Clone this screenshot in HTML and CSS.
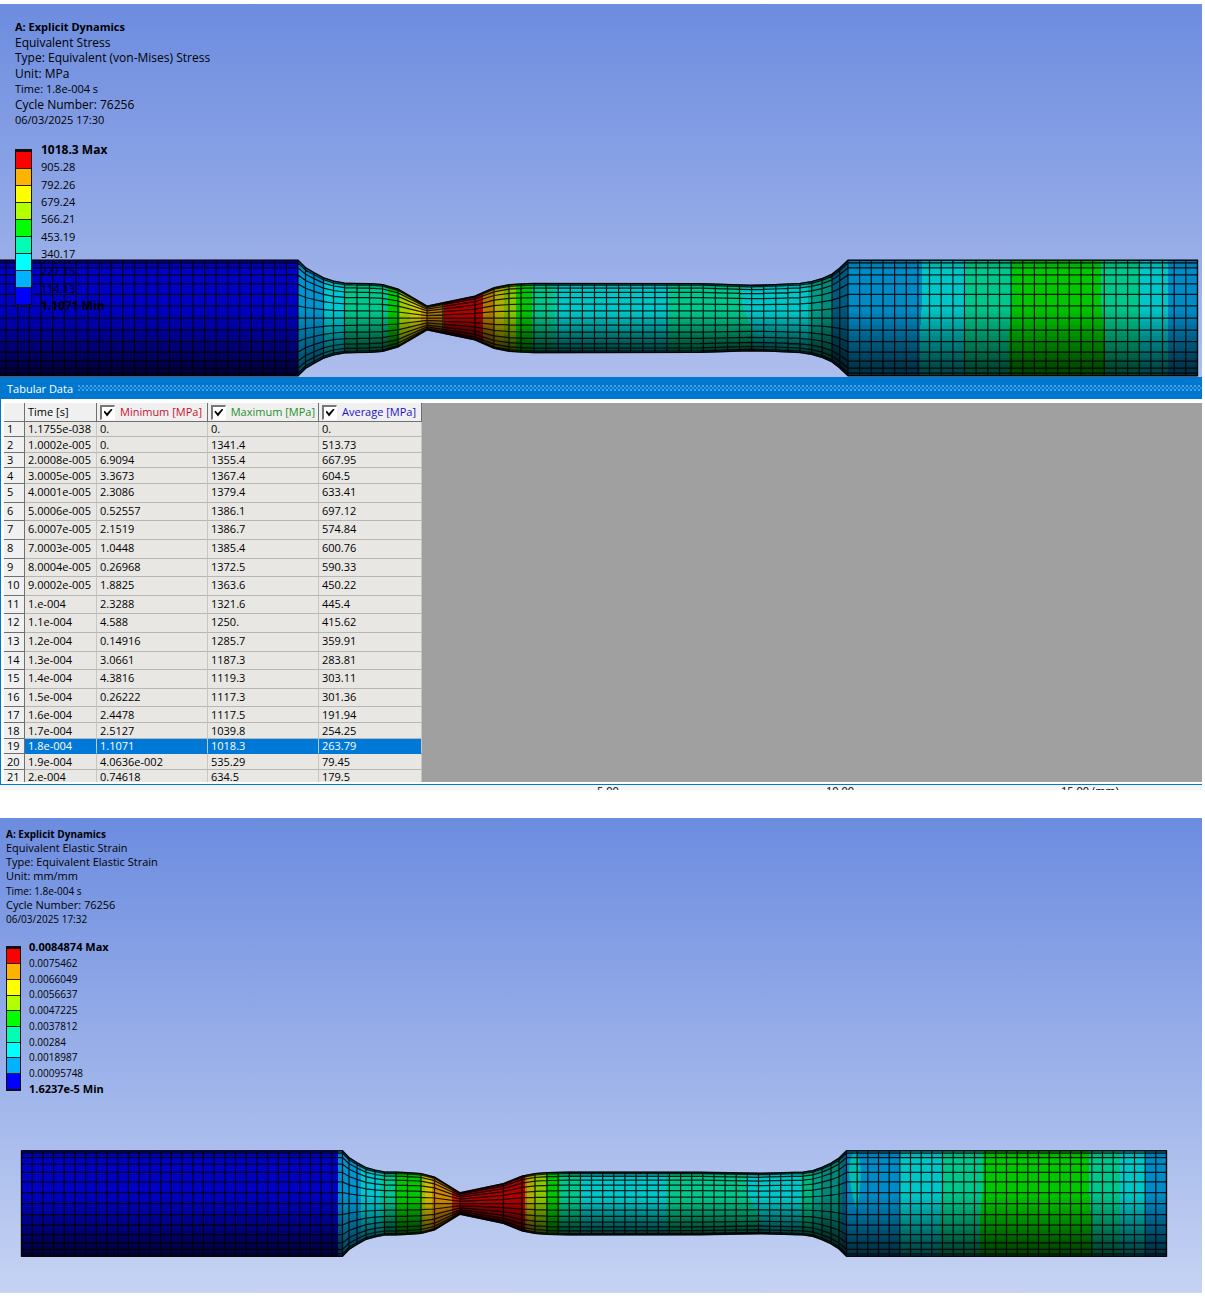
FILE: index.html
```html
<!DOCTYPE html>
<html lang="en">
<head>
<meta charset="utf-8">
<meta name="viewport" content="width=device-width, initial-scale=1">
<title>Explicit Dynamics results</title>
<link rel="stylesheet" href="styles.css">
</head>
<body>
<main class="page">
  <section class="viewer viewer-stress" aria-label="Equivalent Stress">
    <svg class="model" id="stress-model" viewBox="0 4 1202 373" role="img" aria-label="Specimen coloured by equivalent stress"></svg>
    <div class="overlay">
      <div class="info">
        <strong>A: Explicit Dynamics</strong>
        <span>Equivalent Stress</span>
        <span>Type: Equivalent (von-Mises) Stress</span>
        <span>Unit: MPa</span>
        <time>Time: 1.8e-004 s</time>
        <span>Cycle Number: 76256</span>
        <time>06/03/2025 17:30</time>
      </div>
      <div class="legend">
        <div class="scale"><i class="c9"></i><i class="c8"></i><i class="c7"></i><i class="c6"></i><i class="c5"></i><i class="c4"></i><i class="c3"></i><i class="c2"></i><i class="c1"></i></div>
        <div class="values">
          <strong>1018.3 Max</strong><span>905.28</span><span>792.26</span><span>679.24</span><span>566.21</span><span>453.19</span><span>340.17</span><span>227.15</span><span>114.13</span><strong>1.1071 Min</strong>
        </div>
      </div>
    </div>
  </section>

  <section class="panel">
    <header class="panel-title"><h2>Tabular Data</h2><span class="grip"></span></header>
    <div class="panel-body">
      <div class="sheet">
      <table class="data">
        <colgroup><col class="col-no"><col class="col-time"><col class="col-wide"><col class="col-wide"><col class="col-avg"></colgroup>
        <thead>
          <tr>
            <th></th>
            <th>Time [s]</th>
            <th><label class="min"><input type="checkbox" checked>Minimum [MPa]</label></th>
            <th><label class="max"><input type="checkbox" checked>Maximum [MPa]</label></th>
            <th><label class="avg"><input type="checkbox" checked>Average [MPa]</label></th>
          </tr>
        </thead>
        <tbody>
          <tr><th>1</th><td>1.1755e-038</td><td>0.</td><td>0.</td><td>0.</td></tr>
          <tr class="h16"><th>2</th><td>1.0002e-005</td><td>0.</td><td>1341.4</td><td>513.73</td></tr>
          <tr><th>3</th><td>2.0008e-005</td><td>6.9094</td><td>1355.4</td><td>667.95</td></tr>
          <tr class="h16"><th>4</th><td>3.0005e-005</td><td>3.3673</td><td>1367.4</td><td>604.5</td></tr>
          <tr class="h19"><th>5</th><td>4.0001e-005</td><td>2.3086</td><td>1379.4</td><td>633.41</td></tr>
          <tr class="h18"><th>6</th><td>5.0006e-005</td><td>0.52557</td><td>1386.1</td><td>697.12</td></tr>
          <tr class="h19"><th>7</th><td>6.0007e-005</td><td>2.1519</td><td>1386.7</td><td>574.84</td></tr>
          <tr class="h19"><th>8</th><td>7.0003e-005</td><td>1.0448</td><td>1385.4</td><td>600.76</td></tr>
          <tr class="h18"><th>9</th><td>8.0004e-005</td><td>0.26968</td><td>1372.5</td><td>590.33</td></tr>
          <tr class="h19"><th>10</th><td>9.0002e-005</td><td>1.8825</td><td>1363.6</td><td>450.22</td></tr>
          <tr class="h18"><th>11</th><td>1.e-004</td><td>2.3288</td><td>1321.6</td><td>445.4</td></tr>
          <tr class="h19"><th>12</th><td>1.1e-004</td><td>4.588</td><td>1250.</td><td>415.62</td></tr>
          <tr class="h19"><th>13</th><td>1.2e-004</td><td>0.14916</td><td>1285.7</td><td>359.91</td></tr>
          <tr class="h18"><th>14</th><td>1.3e-004</td><td>3.0661</td><td>1187.3</td><td>283.81</td></tr>
          <tr class="h19"><th>15</th><td>1.4e-004</td><td>4.3816</td><td>1119.3</td><td>303.11</td></tr>
          <tr class="h18"><th>16</th><td>1.5e-004</td><td>0.26222</td><td>1117.3</td><td>301.36</td></tr>
          <tr class="h16"><th>17</th><td>1.6e-004</td><td>2.4478</td><td>1117.5</td><td>191.94</td></tr>
          <tr class="h16"><th>18</th><td>1.7e-004</td><td>2.5127</td><td>1039.8</td><td>254.25</td></tr>
          <tr class="selected"><th>19</th><td>1.8e-004</td><td>1.1071</td><td>1018.3</td><td>263.79</td></tr>
          <tr class="h16"><th>20</th><td>1.9e-004</td><td>4.0636e-002</td><td>535.29</td><td>79.45</td></tr>
          <tr><th>21</th><td>2.e-004</td><td>0.74618</td><td>634.5</td><td>179.5</td></tr>
        </tbody>
      </table>
      </div>
    </div>
  </section>
  <div class="ruler"><span></span><span>5.00</span><span>10.00</span><span>15.00 (mm)</span></div>

  <section class="viewer viewer-strain" aria-label="Equivalent Elastic Strain">
    <svg class="model" id="strain-model" viewBox="0 818 1202 475" role="img" aria-label="Specimen coloured by equivalent elastic strain"></svg>
    <div class="overlay">
      <div class="info">
        <strong>A: Explicit Dynamics</strong>
        <span>Equivalent Elastic Strain</span>
        <span>Type: Equivalent Elastic Strain</span>
        <span>Unit: mm/mm</span>
        <time>Time: 1.8e-004 s</time>
        <span>Cycle Number: 76256</span>
        <time>06/03/2025 17:32</time>
      </div>
      <div class="legend">
        <div class="scale"><i class="c9"></i><i class="c8"></i><i class="c7"></i><i class="c6"></i><i class="c5"></i><i class="c4"></i><i class="c3"></i><i class="c2"></i><i class="c1"></i></div>
        <div class="values">
          <strong>0.0084874 Max</strong><span>0.0075462</span><span>0.0066049</span><span>0.0056637</span><span>0.0047225</span><span>0.0037812</span><span>0.00284</span><span>0.0018987</span><span>0.00095748</span><strong>1.6237e-5 Min</strong>
        </div>
      </div>
    </div>
  </section>
</main>
<script src="mesh.js"></script>
</body>
</html>
```
FILE: styles.css
```css
* { box-sizing: border-box; }

body {
  margin: 0;
  background: #fff;
  color: #000;
  font-family: "Open Sans", "Noto Sans", sans-serif;
  font-size: 11px;
}

.page { padding: 4px 3px 3px 0; }

/* Result viewers: the model fills the cell, the annotations lie over it */
.viewer { display: grid; }
.viewer > * { grid-area: 1 / 1; }
.viewer-stress { background: linear-gradient(#6c8cdf, #aebeed); }
.viewer-strain { background: linear-gradient(#6c8cdf, #c6d3f3); }
.model { display: block; width: 100%; height: auto; }

.info, .values {
  display: flex;
  flex-direction: column;
  justify-content: space-between;
  white-space: nowrap;
}
.legend { display: flex; align-items: center; }
.scale {
  display: flex;
  flex-direction: column;
  border: 1px solid #111;
  border-top-width: 3px;
  border-bottom-width: 2px;
}
.scale i { flex: 1; border-bottom: 1px solid #222; }
.scale i:last-child { border-bottom: 0; }

.viewer-stress .overlay { padding: 15px; line-height: 15px; }
.viewer-stress .info { height: 108px; }
.viewer-stress .info span, .viewer-stress .values strong { font-size: 12px; }
.viewer-stress .legend { gap: 9px; margin-top: 15px; }
.viewer-stress .scale { width: 17px; height: 158px; }
.viewer-stress .values { height: 171px; }

.viewer-strain .overlay { padding: 9px 6px; line-height: 14px; font-size: 10px; }
.viewer-strain .info { height: 99px; }
.viewer-strain .info span, .viewer-strain .values strong { font-size: 11px; }
.viewer-strain .legend { gap: 8px; margin-top: 14px; }
.viewer-strain .scale { width: 15px; height: 145px; }
.viewer-strain .values { height: 156px; }

.c1 { background: #00f; }
.c2 { background: #00b3ff; }
.c3 { background: #0ff; }
.c4 { background: #00ffb3; }
.c5 { background: #0f0; }
.c6 { background: #b3ff00; }
.c7 { background: #ff0; }
.c8 { background: #ffb300; }
.c9 { background: #f00; }

/* Tabular data */
.panel { border-left: 1px solid #0078d0; border-bottom: 1px solid #0078d0; }
.panel-title {
  display: flex;
  align-items: center;
  gap: 5px;
  height: 22px;
  margin-left: -1px;
  padding-left: 7px;
  background: #0078d0;
  color: #fff;
}
.panel-title h2 { margin: 0; font-size: 11px; font-weight: 400; }
.grip {
  flex: 1;
  height: 6px;
  background-image:
    radial-gradient(circle at 1px 1px, #4a9fdd 1px, transparent 1px),
    radial-gradient(circle at 3px 3px, #3391d9 1px, transparent 1px);
  background-size: 4px 4px;
}
.panel-body { padding: 4px 0 2px 3px; }
.sheet { height: 379px; overflow: hidden; background: #a0a0a0; }
.data {
  width: 418px;
  border-collapse: separate;
  border-spacing: 0;
  table-layout: fixed;
  line-height: 14px;
  white-space: nowrap;
}
.col-no { width: 21px; }
.col-time { width: 72px; }
.col-wide { width: 111px; }
.col-avg { width: 103px; }
.data th, .data td { padding: 0 3px; text-align: left; font-weight: 400; overflow: hidden; }
.data td { background: #e9e7e3; border-right: 1px solid #c8c6c3; border-bottom: 1px solid #b8b6b3; }
.data th { background: #f0f0f0; border-right: 1px solid #707070; border-bottom: 1px solid #707070; }
.data thead th { height: 19px; }
.data tr { height: 15px; }
.data .h16 { height: 16px; }
.data .h18 { height: 18px; }
.data .h19 { height: 19px; }
.h18 > *, .h19 > * { vertical-align: top; }
.data .h18 > *, .data .h19 > * { padding-top: 1px; }
.data .h16 > * { vertical-align: bottom; }
.data .selected td { background: #0078d7; color: #fff; border-bottom-color: #0078d7; }
.data label { display: flex; align-items: center; gap: 5px; }
.min { color: #c8102e; }
.max { color: #1f8f2b; }
.avg { color: #1c10c8; }

input[type="checkbox"] {
  appearance: none;
  width: 15px;
  height: 15px;
  margin: 0;
  border: 1px solid #fff;
  border-top: 2px solid #777;
  border-left: 2px solid #777;
  background: #fff;
  display: grid;
  place-items: center;
}
input[type="checkbox"]:checked::before {
  content: "";
  width: 9px;
  height: 8px;
  background: #000;
  clip-path: polygon(0 40%, 15% 28%, 38% 60%, 88% 0, 100% 14%, 40% 100%);
}

/* Scale ruler, cut off by the panel above and the view's lower edge */
.ruler {
  display: grid;
  grid-template-columns: 597fr 229fr 235fr 141fr;
  height: 5px;
  margin-bottom: 28px;
  overflow: hidden;
  background: #f3f5fd;
  line-height: 12px;
}
```
FILE: mesh.js
```js
// Draws the two specimens: contour bands, shading and element edges.
const NS = "http://www.w3.org/2000/svg";
const COLOURS = {
  b: "#0000ff", s: "#00b3ff", c: "#00ffff", t: "#00ffb3", g: "#00ff00",
  l: "#b3ff00", y: "#ffff00", o: "#ffb300", r: "#ff0000", m: "#00dcc0"
};

function steps(from, to, count) {
  return Array.from({ length: count + 1 }, (_, i) => from + (to - from) * i / count);
}

function add(parent, name, attrs) {
  const el = document.createElementNS(NS, name);
  for (const key in attrs) el.setAttribute(key, attrs[key]);
  parent.appendChild(el);
  return el;
}

function drawSpecimen(id, m) {
  const svg = document.getElementById(id);
  const radius = x => {
    const p = m.profile;
    for (let i = 1; i < p.length; i++) {
      if (x <= p[i][0]) {
        const t = (x - p[i - 1][0]) / (p[i][0] - p[i - 1][0]);
        return p[i - 1][1] + t * (p[i][1] - p[i - 1][1]);
      }
    }
    return p[p.length - 1][1];
  };
  const line = (f, list) => list.map(p => p[0].toFixed(1) + " " + (m.cy + f * p[1]).toFixed(1));
  const strip = (a, b, list) => "M" + line(a, list).concat(line(b, list).reverse()).join("L") + "Z";

  const defs = add(svg, "defs", {});
  const clip = add(defs, "clipPath", { id: id + "-clip" });
  add(clip, "path", { d: strip(-1, 1, m.profile) });
  const body = add(svg, "g", { "clip-path": "url(#" + id + "-clip)" });
  const top = m.cy - m.profile[0][1];
  const bottom = m.cy + m.profile[0][1];

  // each band: colour, left edge at the top, left edge at the bottom
  m.bands.forEach((band, i) => {
    const next = m.bands[i + 1] || ["", m.end, m.end];
    const x0 = band[1], x1 = band[2] || band[1];
    const x2 = next[1], x3 = next[2] || next[1];
    add(body, "path", {
      d: `M${x0} ${top}H${x2}L${x2} ${m.cy - 15}L${x3} ${m.cy + 15}V${bottom}H${x1}V${m.cy + 15}L${x0} ${m.cy - 15}Z`,
      fill: COLOURS[band[0]], "shape-rendering": "crispEdges"
    });
  });
  if (m.spot) add(body, "path", { d: m.spot, fill: "#00f5e0" });

  // light from above: the lower half falls off into shade
  const stops = [[-1, .4], [-.85, .22], [-.2, .22], [0, .3], [.25, .42], [.5, .54], [.75, .67], [1, .76]];
  const shade = f => {
    for (let i = 1; i < stops.length; i++) {
      if (f <= stops[i][0]) {
        const t = (f - stops[i - 1][0]) / (stops[i][0] - stops[i - 1][0]);
        return stops[i - 1][1] + t * (stops[i][1] - stops[i - 1][1]);
      }
    }
  };
  const n = 32;
  for (let i = 0; i < n; i++) {
    const a = -1 + 2 * i / n, b = -1 + 2 * (i + 1) / n;
    add(body, "path", {
      d: strip(a, b, m.profile), opacity: shade((a + b) / 2).toFixed(3), "shape-rendering": "crispEdges"
    });
  }
  // faces turned towards or away from the light
  m.facets.forEach(g => add(body, "path", {
    d: `M${g[0]} ${top}H${g[1]}V${bottom}H${g[0]}Z`, fill: g[2], opacity: g[3]
  }));

  // element edges
  let d = "";
  for (let k = -7; k <= 7; k++) {
    d += "M" + line(Math.sin(k * 12 * Math.PI / 180), m.profile).join("L");
  }
  m.columns.forEach(x => {
    const r = radius(x);
    d += `M${x.toFixed(1)} ${(m.cy - r).toFixed(1)}V${(m.cy + r).toFixed(1)}`;
  });
  add(svg, "path", { d, fill: "none", stroke: "#000", "stroke-opacity": .85, "stroke-width": 1.25 });
  add(svg, "path", { d: strip(-1, 1, m.profile), fill: "none", stroke: "#000", "stroke-width": 1.2, "stroke-opacity": .8 });
}

drawSpecimen("stress-model", {
  cy: 318, end: 1197.5,
  profile: [[-2, 58], [298, 58], [305.5, 50.5], [314, 45.5], [323.5, 40.3], [333.5, 37], [344.5, 35], [357, 34.7],
    [369.5, 34.5], [382.5, 33.5], [398, 29], [427, 12], [475, 22], [494, 30.3], [509, 33.3], [521, 34.2],
    [534, 34.7], [700, 34.5], [750, 32.8], [775, 33.5], [800, 34.7], [811.7, 36.5], [822, 39.5], [832, 44],
    [839.7, 50], [848, 58], [1197.5, 58]],
  columns: [...steps(6, 298, 25), 305.5, 314, 323.5, 333.5, 344.5, 357, 369.5, 382.5, 398, 427, 443, 475, 494, 509, 521,
    ...steps(534, 800, 22), 811.7, 822, 832, 839.7, ...steps(848, 1197.5, 30)],
  bands: [["b", -2], ["s", 298], ["c", 324], ["t", 344], ["g", 388], ["l", 400], ["y", 410], ["o", 421], ["r", 444],
    ["o", 483], ["y", 494], ["l", 504], ["g", 516], ["t", 532], ["c", 555], ["t", 669], ["c", 742, 753], ["m", 808],
    ["s", 832], ["c", 922, 920], ["t", 966, 964], ["g", 1012, 1009], ["t", 1101, 1104], ["c", 1140], ["s", 1168]],
  facets: [[298, 345, "#00c8ff", .16], [398, 427, "#ffe000", .2], [427, 509, "#200", .12],
    [811, 822, "#000", .08], [822, 832, "#000", .18], [832, 848, "#000", .36]]
});

drawSpecimen("strain-model", {
  cy: 1203.5, end: 1166.5,
  profile: [[21.5, 53], [342.5, 53], [349, 46], [357, 41], [366, 36], [375, 33.5], [384.5, 31.7], [396, 31.5],
    [407.5, 31], [421, 30], [434.5, 26.5], [460, 10.8], [503.5, 20], [522, 27.5], [535, 30], [547, 31],
    [570, 31.5], [700, 31.4], [760, 30.3], [803, 31.5], [813, 33], [822, 36.3], [831, 40.5], [839, 45.5],
    [846.5, 53], [1166.5, 53]],
  columns: [...steps(21.5, 342.5, 30), 349, 357, 366, 375, 384.5, 396, 407.5, 421, 434.5, 460, 503.5, 522, 535,
    ...steps(547, 803, 23), 813, 822, 831, 839, ...steps(846.5, 1166.5, 30)],
  bands: [["b", 21], ["s", 338], ["c", 361], ["t", 380], ["g", 396], ["l", 421], ["y", 425], ["o", 432], ["r", 452],
    ["o", 525], ["y", 527], ["l", 534], ["g", 546], ["t", 560], ["c", 581], ["t", 666], ["c", 746, 759], ["t", 801],
    ["m", 813], ["s", 842], ["c", 900], ["t", 942, 940], ["g", 983, 980], ["t", 1089, 1091], ["c", 1120], ["s", 1145]],
  spot: "M855 1152Q860 1154 861 1172Q860 1195 857 1211Q850 1190 849 1170Q850 1154 855 1152Z",
  facets: [[342, 384, "#00c8ff", .16], [421, 460, "#ff8000", .16], [460, 535, "#200", .12],
    [803, 822, "#000", .08], [822, 839, "#000", .2], [839, 846.5, "#000", .32]]
});
```
